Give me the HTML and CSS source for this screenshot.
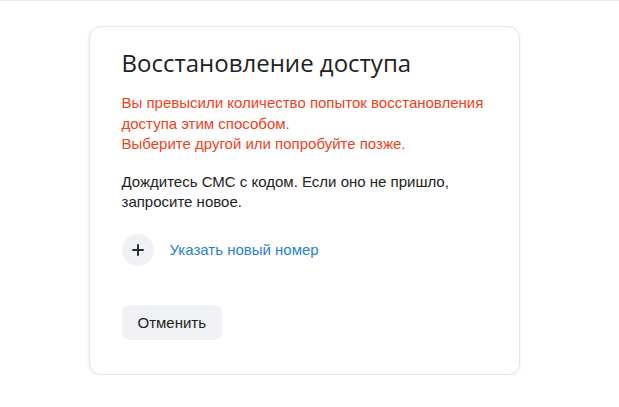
FILE: index.html
```html
<!DOCTYPE html>
<html lang="ru">
<head>
<meta charset="utf-8">
<link rel="stylesheet" href="styles.css">
</head>
<body>
<div class="topline"></div>
<main class="page">
  <section class="card">
    <h1 class="title">Восстановление доступа</h1>
    <p class="error">Вы превысили количество попыток восстановления доступа этим способом.<br>Выберите другой или попробуйте позже.</p>
    <p class="info">Дождитесь СМС с кодом. Если оно не пришло, запросите новое.</p>
    <a class="action" href="#">
      <span class="plus"><svg width="12" height="12" viewBox="0 0 12 12"><path d="M6 1v10M1 6h10" stroke="#2c2d2e" stroke-width="2" stroke-linecap="round"/></svg></span>
      <span class="action-text">Указать новый номер</span>
    </a>
    <button class="cancel" type="button">Отменить</button>
  </section>
</main>
</body>
</html>
```
FILE: styles.css
```css
html, body { margin: 0; padding: 0; background: #fff; }
body { font-family: "Liberation Sans", Arial, sans-serif; color: #222; }
.topline { height: 1px; background: #ededed; }
.page { display: flex; justify-content: center; padding-top: 25px; padding-right: 11px; }
.card {
  width: 431px; box-sizing: border-box; height: 349px;
  border: 1px solid #e3e3e8; border-radius: 12px;
  box-shadow: 0 2px 4px rgba(0,0,0,0.07);
  padding: 20px 32px 0 32px;
  display: flex; flex-direction: column; align-items: flex-start;
}
.title { font-family: "Open Sans", sans-serif; font-weight: 400; font-size: 24px; line-height: 32px; margin: 0; color: #222; letter-spacing: 0; }
.error { margin: 14px 0 0; font-size: 15px; line-height: 20.5px; color: #f2401a; }
.info { margin: 17px 0 0; font-size: 15px; line-height: 20.5px; color: #222; }
.action { display: flex; align-items: center; gap: 16px; margin-top: 21px; text-decoration: none; }
.plus { width: 32px; height: 32px; border-radius: 50%; background: #f0f1f4; display: flex; align-items: center; justify-content: center; }
.action-text { color: #2a7de1; font-size: 15px; }
.cancel { margin-top: 39px; height: 35px; padding: 0 16px; border: 0; border-radius: 8px; background: #f0f1f4; font-family: "Liberation Sans", Arial, sans-serif; font-size: 15px; color: #222; }
```
